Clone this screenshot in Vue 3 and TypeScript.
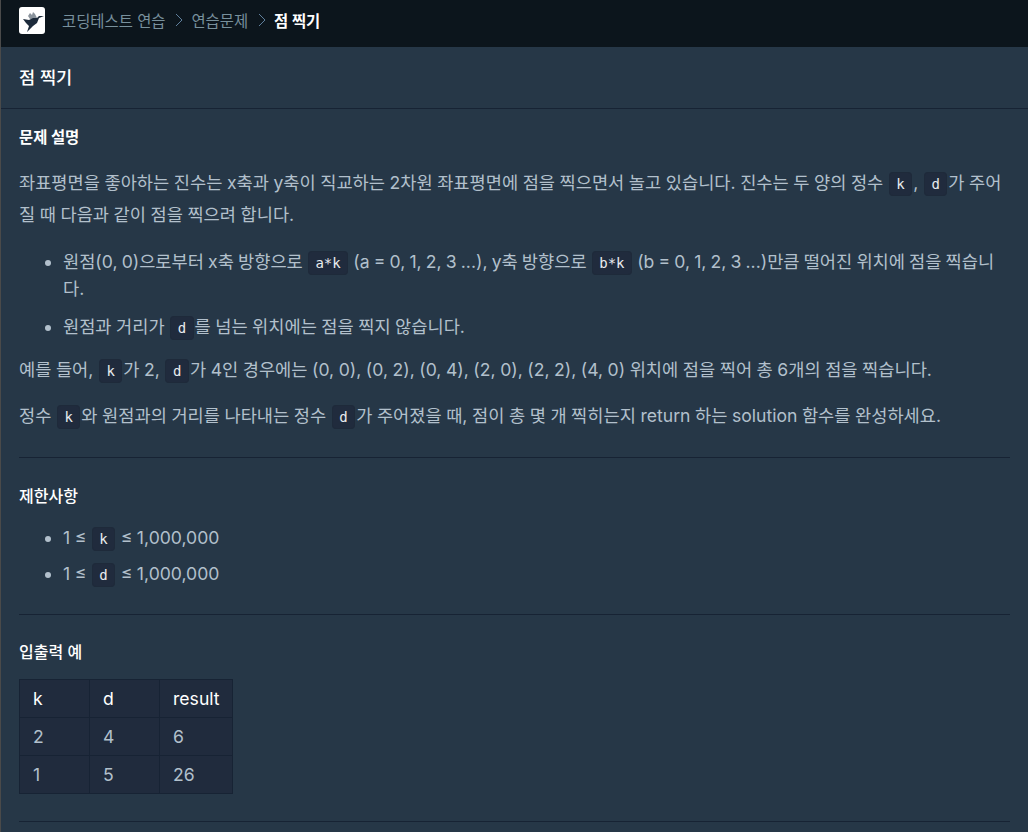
<script setup lang="ts">
const rows: string[][] = [['2', '4', '6'], ['1', '5', '26']]
</script>

<template>
  <div class="page">
    <header class="nav">
      <div class="logo">
        <svg width="26" height="27" viewBox="0 0 26 27">
          <path d="M9 9 L11 6 L13 8 L14 5 L16 7 L18 11 L14 13 L11 12 Z" fill="#8a939c" />
          <path d="M4 12 L10 13 L14 11 L18 11 L20 9 L25 9 L20 11 L18 16 L14 19 L8 25 L10 19 L7 16 Z" fill="#1c2a3a" />
        </svg>
      </div>
      <nav class="crumbs">
        <span>코딩테스트 연습</span>
        <svg class="chev" width="10" height="16" viewBox="0 0 10 16"><path d="M3 2 L9 8 L3 14" fill="none" stroke="#5f7f9c" stroke-width="1" /></svg>
        <span>연습문제</span>
        <svg class="chev" width="10" height="16" viewBox="0 0 10 16"><path d="M3 2 L9 8 L3 14" fill="none" stroke="#5f7f9c" stroke-width="1" /></svg>
        <strong>점 찍기</strong>
      </nav>
    </header>
    <div class="title">점 찍기</div>
    <main class="body">
      <h6>문제 설명</h6>
      <p>좌표평면을 좋아하는 진수는 x축과 y축이 직교하는 2차원 좌표평면에 점을 찍으면서 놀고 있습니다. 진수는 두 양의 정수 <code>k</code>, <code>d</code>가 주어질 때 다음과 같이 점을 찍으려 합니다.</p>
      <ul>
        <li class="tight">원점(0, 0)으로부터 x축 방향으로 <code>a*k</code> (a = 0, 1, 2, 3 ...), y축 방향으로 <code>b*k</code> (b = 0, 1, 2, 3 ...)만큼 떨어진 위치에 점을 찍습니다.</li>
        <li>원점과 거리가 <code>d</code>를 넘는 위치에는 점을 찍지 않습니다.</li>
      </ul>
      <p>예를 들어, <code>k</code>가 2, <code>d</code>가 4인 경우에는 (0, 0), (0, 2), (0, 4), (2, 0), (2, 2), (4, 0) 위치에 점을 찍어 총 6개의 점을 찍습니다.</p>
      <p>정수 <code>k</code>와 원점과의 거리를 나타내는 정수 <code>d</code>가 주어졌을 때, 점이 총 몇 개 찍히는지 return 하는 solution 함수를 완성하세요.</p>
      <hr />
      <h5>제한사항</h5>
      <ul class="limits">
        <li>1 ≤ <code>k</code> ≤ 1,000,000</li>
        <li>1 ≤ <code>d</code> ≤ 1,000,000</li>
      </ul>
      <hr class="before-table" />
      <h5>입출력 예</h5>
      <table>
        <thead>
          <tr><th>k</th><th>d</th><th>result</th></tr>
        </thead>
        <tbody>
          <tr v-for="(r, i) in rows" :key="i">
            <td v-for="(c, j) in r" :key="j">{{ c }}</td>
          </tr>
        </tbody>
      </table>
      <hr />
    </main>
  </div>
</template>

<style>
html, body { background: #263747; overflow: hidden; }
</style>

<style scoped>
.page {
  width: 1028px;
  height: 832px;
  overflow: hidden;
  box-sizing: border-box;
  background: #263747;
  border-left: 1px solid #4a4a4a;
  font-family: Inter, "Noto Sans CJK KR", sans-serif;
  color: #b2c0cc;
}
.nav {
  height: 47px;
  background: #0c151c;
  display: flex;
  align-items: center;
  padding-left: 18px;
  padding-bottom: 6px;
  box-sizing: border-box;
}
.logo {
  width: 26px;
  height: 27px;
  background: #fff;
  border-radius: 3px;
  margin-right: 17px;
}
.crumbs {
  display: flex;
  align-items: center;
  gap: 8px;
  font-size: 15.4px;
  color: #78909c;
  padding-bottom: 2px;
}
.crumbs strong { color: #fff; font-weight: 700; }
.title {
  height: 59px;
  display: flex;
  align-items: center;
  padding-left: 18px;
  padding-bottom: 2px;
  font-size: 17.6px;
  font-weight: 500;
  color: #fff;
  border-bottom: 1px solid #172334;
}
.body { padding: 0 18px; }
h6 {
  margin: 19px 0 0;
  font-size: 15.4px;
  font-weight: 700;
  color: #fff;
  line-height: 20px;
}
h5 {
  margin: 0;
  font-size: 16px;
  font-weight: 500;
  color: #fff;
  line-height: 24px;
}
p {
  margin: 0 0 14px;
  font-size: 17.6px;
  line-height: 32px;
  word-spacing: -0.4px;
}
h6 + p { margin-top: 19px; }
ul { margin: 17px 0 13.5px; padding-left: 44px; }
.limits { margin: 15.5px 0 27.5px; }
.limits li { margin-bottom: 9px; }
li { font-size: 17.6px; line-height: 27px; margin-bottom: 11px; word-spacing: -0.45px; }
li.tight { word-spacing: -0.8px; }
li::marker { color: #b2c0cc; }
code {
  font-family: "DejaVu Sans Mono", monospace;
  font-size: 14px;
  line-height: 1;
  color: #e9ecef;
  background: #202b3d;
  border: 1px solid #1e2a3a;
  border-radius: 4px;
  padding: 3px 6.5px;
  margin: 0 1px;
}
hr {
  border: 0;
  border-top: 1px solid #172334;
  margin: 25px 0 26.5px;
}
hr.before-table { margin-bottom: 24.5px; }
table { border-collapse: collapse; background: #202b3d; margin: 15px 0 0; }
table + hr { margin-top: 27px; }
th, td {
  border: 1px solid #172334;
  padding: 0 13px;
  height: 37px;
  text-align: left;
  font-size: 17.6px;
  font-weight: 400;
  min-width: 43px;
}
th:last-child, td:last-child { padding-right: 12px; }
th { color: #fff; }
</style>
